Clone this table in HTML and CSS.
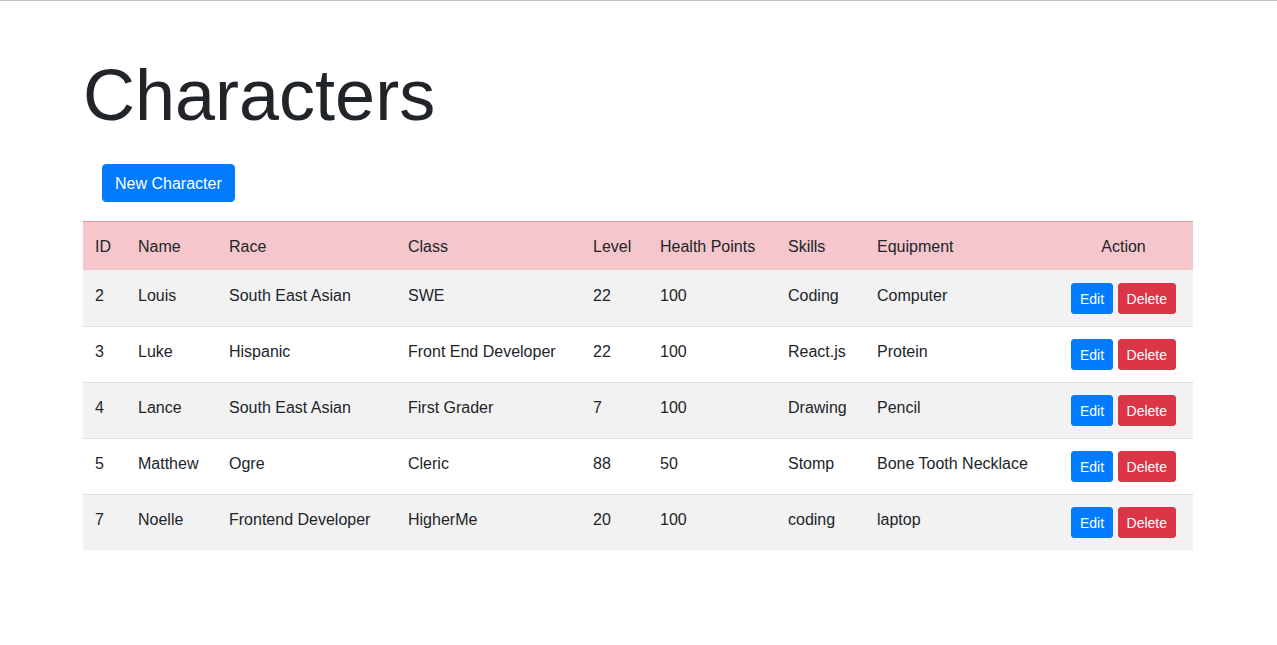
FILE: index.html
```html
<!DOCTYPE html>
<html lang="en">
<head>
<meta charset="utf-8">
<title>Characters</title>
<link rel="stylesheet" href="styles.css">
</head>
<body>
<div class="container">
  <h1 class="title">Characters</h1>
  <div class="toolbar">
    <button class="btn btn-primary btn-new">New Character</button>
  </div>
  <table class="table">
    <colgroup>
      <col class="c-id"><col class="c-name"><col class="c-race"><col class="c-class"><col class="c-level"><col class="c-hp"><col class="c-skills"><col class="c-equip"><col class="c-action">
    </colgroup>
    <thead>
      <tr>
        <th>ID</th><th>Name</th><th>Race</th><th>Class</th><th>Level</th><th>Health Points</th><th>Skills</th><th>Equipment</th><th class="center">Action</th>
      </tr>
    </thead>
    <tbody>
      <tr>
        <td>2</td><td>Louis</td><td>South East Asian</td><td>SWE</td><td>22</td><td>100</td><td>Coding</td><td>Computer</td>
        <td class="actions"><button class="btn btn-sm btn-primary">Edit</button> <button class="btn btn-sm btn-danger">Delete</button></td>
      </tr>
      <tr>
        <td>3</td><td>Luke</td><td>Hispanic</td><td>Front End Developer</td><td>22</td><td>100</td><td>React.js</td><td>Protein</td>
        <td class="actions"><button class="btn btn-sm btn-primary">Edit</button> <button class="btn btn-sm btn-danger">Delete</button></td>
      </tr>
      <tr>
        <td>4</td><td>Lance</td><td>South East Asian</td><td>First Grader</td><td>7</td><td>100</td><td>Drawing</td><td>Pencil</td>
        <td class="actions"><button class="btn btn-sm btn-primary">Edit</button> <button class="btn btn-sm btn-danger">Delete</button></td>
      </tr>
      <tr>
        <td>5</td><td>Matthew</td><td>Ogre</td><td>Cleric</td><td>88</td><td>50</td><td>Stomp</td><td>Bone Tooth Necklace</td>
        <td class="actions"><button class="btn btn-sm btn-primary">Edit</button> <button class="btn btn-sm btn-danger">Delete</button></td>
      </tr>
      <tr>
        <td>7</td><td>Noelle</td><td>Frontend Developer</td><td>HigherMe</td><td>20</td><td>100</td><td>coding</td><td>laptop</td>
        <td class="actions"><button class="btn btn-sm btn-primary">Edit</button> <button class="btn btn-sm btn-danger">Delete</button></td>
      </tr>
    </tbody>
  </table>
</div>
</body>
</html>
```

FILE: styles.css
```css
html, body {
  margin: 0;
  padding: 0;
}
body {
  border-top: 1px solid #bfbfbf;
  font-family: "Liberation Sans", Arial, sans-serif;
  font-size: 16px;
  line-height: 1.5;
  color: #212529;
  background: #fff;
}
.container {
  width: 1111px;
  margin: 0 auto;
  padding: 51px 0 0;
}
.title {
  margin: 0 0 8px;
  font-size: 72px;
  font-weight: 400;
  line-height: 1.2;
}
.toolbar {
  padding: 17.6px 0 19px 19px;
}
.btn {
  display: inline-block;
  font-family: inherit;
  font-size: 16px;
  line-height: 1.5;
  padding: 6px 12px;
  border: 1px solid transparent;
  border-radius: 4px;
  color: #fff;
  cursor: pointer;
  vertical-align: middle;
  margin: 0;
}
.btn-new {
  padding: 7px 12px 5px;
}
.btn-sm {
  font-size: 14px;
  padding: 4px 8px;
  border-radius: 3px;
}
.btn-primary {
  background: #007bff;
  border-color: #007bff;
}
.btn-danger {
  background: #dc3545;
  border-color: #dc3545;
}
.table {
  width: 1110px;
  border-collapse: collapse;
  table-layout: fixed;
}
.c-id { width: 43px; }
.c-name { width: 91px; }
.c-race { width: 179px; }
.c-class { width: 185px; }
.c-level { width: 67px; }
.c-hp { width: 128px; }
.c-skills { width: 89px; }
.c-equip { width: 189px; }
.c-action { width: 139px; }
.table th, .table td {
  padding: 13px 12px 11px;
  text-align: left;
  vertical-align: top;
  white-space: nowrap;
}
.table th {
  font-weight: 400;
  background: #f5c6cb;
  border-top: 1px solid #ed969e;
  vertical-align: bottom;
}
.table td {
  border-top: 1px solid #dee2e6;
}
.table tbody tr:first-child td {
  border-top-color: #f1f1f1;
}
.table tbody tr:nth-child(odd) {
  background: #f2f2f2;
}
.table .center {
  text-align: center;
}
.table .actions {
  text-align: center;
  padding: 12px;
}
.actions .btn-sm {
  padding: 5px 8px 3px;
}
```
